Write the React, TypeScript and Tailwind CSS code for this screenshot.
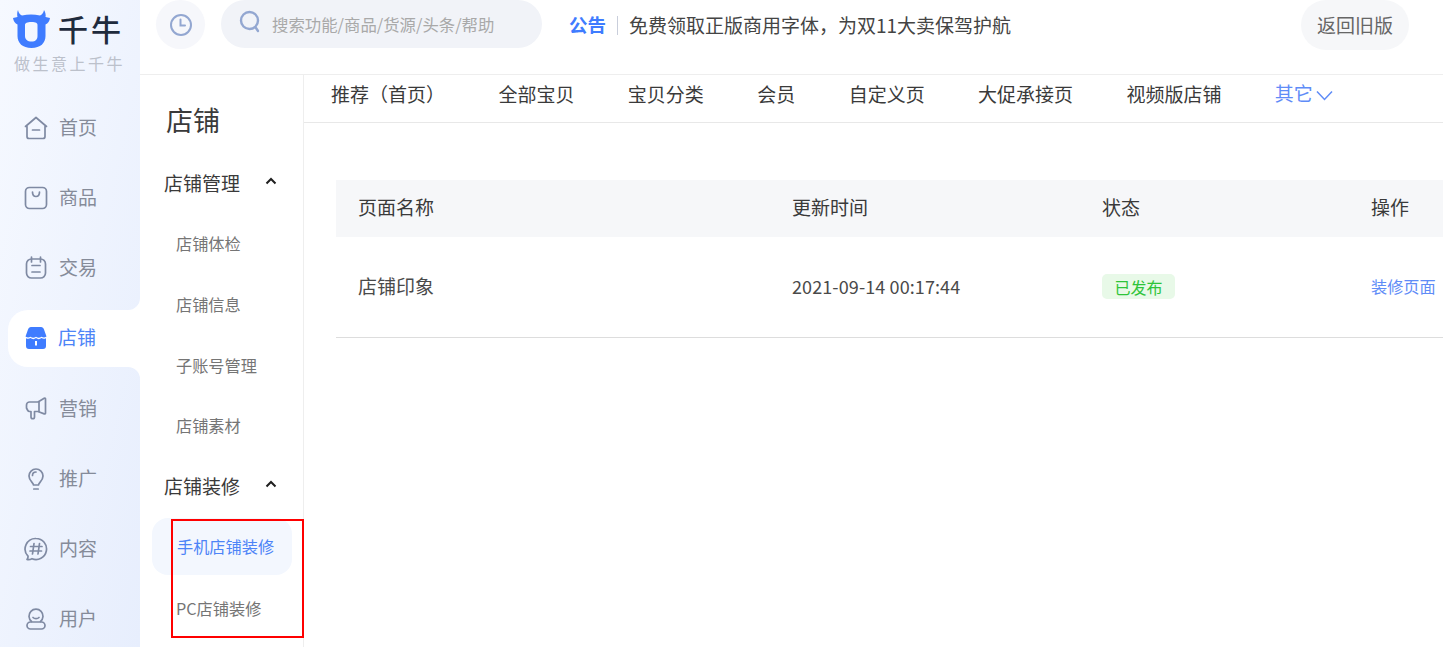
import React from "react"

const navStroke = "#7f8aa3"

const HomeIcon = () => (
  <svg width="24" height="24" viewBox="0 0 24 24" fill="none" stroke={navStroke} strokeWidth="1.7" strokeLinejoin="round" strokeLinecap="round">
    <path d="M1.500 10.500 12 1.500l10.500 9H21v10a2 2 0 0 1-2 2H5a2 2 0 0 1-2-2v-10z" />
    <path d="M8.500 14h7" />
  </svg>
)

const GoodsIcon = () => (
  <svg width="24" height="24" viewBox="0 0 24 24" fill="none" stroke={navStroke} strokeWidth="1.7" strokeLinecap="round">
    <rect x="1.500" y="1.500" width="21" height="21" rx="4" />
    <path d="M8.500 6c0 3 1.500 4.500 3.500 4.500S15.500 9 15.500 6" />
  </svg>
)

const TradeIcon = () => (
  <svg width="24" height="24" viewBox="0 0 24 24" fill="none" stroke={navStroke} strokeWidth="1.7" strokeLinecap="round">
    <rect x="2.500" y="3" width="19" height="19" rx="5" />
    <path d="M7.500 1v5M16.500 1v5M8 9.500h8M8 16h8" />
  </svg>
)

const ShopIcon = () => (
  <svg width="24" height="24" viewBox="0 0 24 24">
    <path d="M7 1h10c1.500 0 2.500 1 3 2.500l2.500 7c-2 1.500-3.500 1.200-5 .2-2 1.500-3.500 1.500-5.500 0-2 1.500-3.500 1.500-5.500 0-1.500 1-3 1.300-5-.2L4 3.500C4.500 2 5.500 1 7 1z" fill="#3f7cff" />
    <path d="M2 12.300c1.700.8 3.200.6 4.500-.2 2 1.500 3.500 1.500 5.500 0 2 1.500 3.500 1.500 5.500 0 1.300.8 2.800 1 4.500.2V20a3 3 0 0 1-3 3H5a3 3 0 0 1-3-3z" fill="#3f7cff" />
    <rect x="11" y="15" width="2" height="4.500" fill="#ffffff" />
  </svg>
)

const MegaphoneIcon = () => (
  <svg width="24" height="24" viewBox="0 0 24 24" fill="none" stroke={navStroke} strokeWidth="1.7" strokeLinejoin="round" strokeLinecap="round">
    <path d="M21.500 3v14c0 .8-.6 1.200-1.300.9L14 15.500H10.500v5.500c0 1-.8 1.700-1.700 1.700S7 22 7 21v-5.500H5.500c-1 0-1.500-.5-2-1.500L2.500 12V9c0-1.800 1.500-3 3-3H14l6.200-3.700c.7-.4 1.300 0 1.300.7z" />
    <path d="M15 6v9.500" />
  </svg>
)

const BulbIcon = () => (
  <svg width="24" height="24" viewBox="0 0 24 24" fill="none" stroke={navStroke} strokeWidth="1.7" strokeLinecap="round" strokeLinejoin="round">
    <path d="M9.500 18c0-2.500-4.500-4-4.500-9a7 7 0 0 1 14 0c0 5-4.500 6.500-4.500 9z" />
    <path d="M9.800 22h4.400M12 5c-2 0-3.500 1.500-3.500 3.500" />
  </svg>
)

const TopicIcon = () => (
  <svg width="24" height="24" viewBox="0 0 24 24" fill="none" stroke={navStroke} strokeWidth="1.7" strokeLinecap="round" strokeLinejoin="round">
    <path d="M12 1.500a10.500 10.500 0 1 1-4 20.200c-1.500.8-3.500 1.200-5 .8.800-1 1.200-2 1-3.300A10.500 10.500 0 0 1 12 1.500z" />
    <path d="M10 6.500 8.500 17M15.500 6.500 14 17M6.500 9.500H18M6 14h11.500" />
  </svg>
)

const UserIcon = () => (
  <svg width="24" height="24" viewBox="0 0 24 24" fill="none" stroke={navStroke} strokeWidth="1.7" strokeLinecap="round">
    <path d="M7.500 14.500a7 7 0 1 1 9 0" />
    <rect x="3" y="15" width="18" height="7" rx="3.500" />
    <path d="M9 10.500c1.500 1.500 4.500 1.500 6 0" />
  </svg>
)

const Corner = ({ flip }: { flip?: boolean }) => (
  <svg
    width="12"
    height="12"
    viewBox="0 0 12 12"
    className={flip ? "absolute right-0 top-full rotate-[-90deg]" : "absolute right-0 bottom-full"}
  >
    <path d="M12 0v12H0A12 12 0 0 0 12 0z" fill="#ffffff" />
  </svg>
)

const navItems = [
  { label: "首页", icon: <HomeIcon /> },
  { label: "商品", icon: <GoodsIcon /> },
  { label: "交易", icon: <TradeIcon /> },
  { label: "店铺", icon: <ShopIcon />, active: true },
  { label: "营销", icon: <MegaphoneIcon /> },
  { label: "推广", icon: <BulbIcon /> },
  { label: "内容", icon: <TopicIcon /> },
  { label: "用户", icon: <UserIcon /> },
]

const tabs = ["推荐（首页）", "全部宝贝", "宝贝分类", "会员", "自定义页", "大促承接页", "视频版店铺"]

const Chevron = () => (
  <svg width="12" height="8" viewBox="0 0 12 8" fill="none" stroke="#1f1f1f" strokeWidth="2">
    <path d="M1.500 6.500 6 2l4.500 4.500" />
  </svg>
)

const SubHead = ({ title }: { title: string }) => (
  <div className="h-[60.7px] pl-[24px] pr-[26px] flex items-center justify-between text-[19px] text-[#3a3a3a]">
    <span>{title}</span>
    <span className="-mt-1">
      <Chevron />
    </span>
  </div>
)

const SubItem = ({ title, active }: { title: string; active?: boolean }) => (
  <div className="h-[60.7px] flex items-center">
    <div
      className={
        active
          ? "ml-3 w-[140px] h-[57px] pl-[25px] pb-[1px] flex items-center rounded-2xl bg-[#f3f7fe] text-[16.2px] text-[#4d84f7]"
          : "ml-3 w-[140px] h-[57px] pl-[24px] flex items-center text-[16.2px] text-[#757575]"
      }
    >
      {title}
    </div>
  </div>
)

export default function App() {
  return (
    <div className="relative w-[1443px] h-[647px] overflow-hidden flex bg-white font-['Noto_Sans_CJK_SC','Noto_Sans',sans-serif]">
      <aside className="w-[140px] shrink-0 bg-gradient-to-br from-[#f6f9ff] to-[#e7eefd]">
        <div className="h-[92.5px] pl-[13px] pt-[10px]">
          <div className="flex items-center gap-[7px] h-[38px]">
            <svg width="38" height="38" viewBox="0 0 38 38">
              <path
                fill="#3f7cff"
                fillRule="evenodd"
                d="M5 0c.5 3 2 4.500 4 5.500 6-1.500 12-1.500 18 0 2-1 3.500-2.500 4-5.500 1.500 2.500 2 5 1.500 7 1.500.5 3 .8 4.500 1-.5 3-2 5.500-4.500 6.500V26c0 7-5 12-14 12S4.500 33 4.500 26V14.500C2 13.500.5 11 0 8c1.500-.2 3-.5 4.500-1C4 5 4 2.500 5 0zM12 15c0-2 2-3 6.500-3s6 1 6 3v11c0 3.500-2 5.500-6 5.500S12 29.500 12 26z"
              />
            </svg>
            <span className="text-[30px] leading-none font-medium text-[#1f2b3d] tracking-[3px] -mt-[3px]">千牛</span>
          </div>
          <div className="mt-[5px] text-[16px] leading-[20px] tracking-[2.500px] text-[#bcc1cb] pl-[1px]">做生意上千牛</div>
        </div>
        <nav>
          {navItems.map((item) => (
            <div key={item.label} className="h-[70.2px] flex items-center">
              <div
                className={
                  item.active
                    ? "relative ml-2 w-[132px] h-[57px] pl-[16px] flex items-center gap-[10px] bg-white rounded-l-[20px] text-[19px] text-[#4d84f7]"
                    : "ml-2 w-[132px] h-[57px] pl-[16px] flex items-center gap-[11px] text-[19px] text-[#858b99]"
                }
              >
                {item.active && <Corner />}
                {item.active && <Corner flip />}
                {item.icon}
                <span className="-mt-[1px]">{item.label}</span>
              </div>
            </div>
          ))}
        </nav>
      </aside>

      <div className="flex-1 min-w-0 flex flex-col">
        <header className="h-[75px] shrink-0 border-b border-[#eeeeee] flex items-start pl-[16px]">
          <div className="w-[49px] h-[49px] rounded-full bg-[#f6f7fb] flex items-center justify-center">
            <svg width="24" height="24" viewBox="0 0 24 24" fill="none" stroke="#93a7d1" strokeWidth="2" strokeLinecap="round">
              <circle cx="12" cy="12" r="10" />
              <path d="M11.500 6.500V12.500H16" />
            </svg>
          </div>
          <div className="ml-[16px] w-[321px] h-[48px] rounded-[24px] bg-[#f1f3f8] flex items-center pl-[18px]">
            <svg width="22" height="24" viewBox="0 0 22 24" fill="none" stroke="#93a7d1" strokeWidth="2.400" strokeLinecap="round" className="-mt-[4px]">
              <circle cx="10.500" cy="10.500" r="8.500" />
              <path d="M17 18l2 3" />
            </svg>
            <span className="ml-[11px] text-[16.400px] text-[#a9a9a9]">搜索功能/商品/货源/头条/帮助</span>
          </div>
          <div className="ml-[27px] h-[50px] flex items-center">
            <span className="text-[18.500px] font-bold text-[#3f7cff]">公告</span>
            <span className="ml-[11px] w-px h-[19px] bg-[#c9cedb]" />
            <span className="ml-[11px] text-[19px] text-[#444444]">免费领取正版商用字体，为双11大卖保驾护航</span>
          </div>
          <button className="ml-auto mr-[34px] w-[108px] h-[50px] rounded-[25px] bg-[#f6f7f9] text-[19px] text-[#666666]">返回旧版</button>
        </header>

        <div className="flex-1 flex min-h-0">
          <div className="w-[164px] shrink-0 border-r border-[#eeeeee]">
            <div className="h-[77.500px] pt-[12px] pl-[26px] flex items-center text-[27px] text-[#3a3a3a]">店铺</div>
            <SubHead title="店铺管理" />
            <SubItem title="店铺体检" />
            <SubItem title="店铺信息" />
            <SubItem title="子账号管理" />
            <SubItem title="店铺素材" />
            <SubHead title="店铺装修" />
            <SubItem title="手机店铺装修" active />
            <SubItem title="PC店铺装修" />
          </div>

          <main className="flex-1 min-w-0">
            <div className="h-[48px] border-b border-[#e8e8e8] pl-[27px] pb-[8px] flex items-center gap-[53.400px] text-[19px] text-[#3a3a3a]">
              {tabs.map((t) => (
                <span key={t} className="whitespace-nowrap">{t}</span>
              ))}
              <span className="flex items-center gap-[3px] text-[#5f8cf7] -mt-[3px]">
                其它
                <svg width="17" height="11" viewBox="0 0 17 11" fill="none" stroke="#5f8cf7" strokeWidth="1.500" className="mt-[5px]">
                  <path d="M1 1.500l7.500 8 7.500-8" />
                </svg>
              </span>
            </div>

            <div className="mt-[57px] ml-[32px]">
              <div className="h-[57px] pb-[2px] bg-[#f6f7f9] grid grid-cols-[434px_310px_291px_1fr] items-center text-[19px] text-[#3a3a3a]">
                <span className="pl-[22px]">页面名称</span>
                <span className="pl-[22px]">更新时间</span>
                <span className="pl-[22px]">状态</span>
                <span>操作</span>
              </div>
              <div className="h-[101px] pb-[2px] border-b border-[#dddddd] grid grid-cols-[434px_310px_291px_1fr] items-center text-[19px] text-[#4a4a4a]">
                <span className="pl-[22px]">店铺印象</span>
                <span className="pl-[22px] text-[18px] tracking-[0.100px] whitespace-nowrap">2021-09-14 00:17:44</span>
                <span className="pl-[22px]">
                  <span className="inline-flex items-center justify-center w-[73px] h-[25px] rounded-[5px] bg-[#e8f9e8] text-[16px] text-[#2fc43a]">已发布</span>
                </span>
                <span className="text-[16.200px] text-[#5f8cf7] whitespace-nowrap">装修页面</span>
              </div>
            </div>
          </main>
        </div>
      </div>

      <div className="absolute left-[171px] top-[519px] w-[133px] h-[119px] border-2 border-[#ff0000]" />
    </div>
  )
}
